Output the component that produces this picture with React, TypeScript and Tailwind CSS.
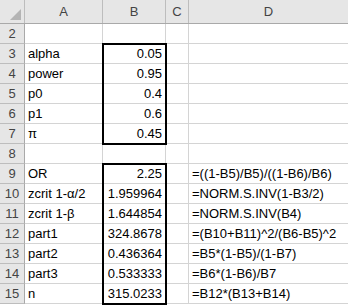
import React from 'react';

type Row = { n: number; a?: string; b?: string; d?: string };

const rows: Row[] = [
    { n: 2 },
    { n: 3, a: 'alpha', b: '0.05' },
    { n: 4, a: 'power', b: '0.95' },
    { n: 5, a: 'p0', b: '0.4' },
    { n: 6, a: 'p1', b: '0.6' },
    { n: 7, a: 'π', b: '0.45' },
    { n: 8 },
    { n: 9, a: 'OR', b: '2.25', d: '=((1-B5)/B5)/((1-B6)/B6)' },
    { n: 10, a: 'zcrit 1-α/2', b: '1.959964', d: '=NORM.S.INV(1-B3/2)' },
    { n: 11, a: 'zcrit 1-β', b: '1.644854', d: '=NORM.S.INV(B4)' },
    { n: 12, a: 'part1', b: '324.8678', d: '=(B10+B11)^2/(B6-B5)^2' },
    { n: 13, a: 'part2', b: '0.436364', d: '=B5*(1-B5)/(1-B7)' },
    { n: 14, a: 'part3', b: '0.533333', d: '=B6*(1-B6)/B7' },
    { n: 15, a: 'n', b: '315.0233', d: '=B12*(B13+B14)' },
];

const cols = 'grid grid-cols-[25px_78px_63px_23px_1fr]';

export default function App() {
    return (
        <div className="w-[348px] h-[306px] overflow-hidden bg-white text-[13px] text-black font-['Liberation_Sans',Arial,sans-serif] leading-none">
            {/* Column headers */}
            <div className={`${cols} h-[24px] bg-[#e6e6e6] border-b border-[#a9a9a9] text-[#444]`}>
                <div className="relative border-r border-[#bdbdbd]">
                    <div className="absolute right-[3px] bottom-[3px] w-0 h-0 border-l-[11px] border-l-transparent border-b-[11px] border-b-[#b4b4b4]" />
                </div>
                <div className="flex items-center justify-center border-r border-[#bdbdbd]">A</div>
                <div className="flex items-center justify-center border-r border-[#bdbdbd]">B</div>
                <div className="flex items-center justify-center border-r border-[#bdbdbd]">C</div>
                <div className="flex items-center justify-center">D</div>
            </div>

            {/* Body */}
            <div className="relative">
                {rows.map((r) => (
                    <div key={r.n} className={`${cols} h-[20px]`}>
                        <div className="flex items-center justify-center bg-[#e6e6e6] text-[#444] border-r border-[#a9a9a9] border-b border-b-[#bdbdbd]">
                            {r.n}
                        </div>
                        <div className="flex items-center pl-[3px] border-r border-b border-[#d4d4d4] whitespace-nowrap">{r.a}</div>
                        <div className="flex items-center justify-end pr-[3px] border-r border-b border-[#d4d4d4]">{r.b}</div>
                        <div className="border-r border-b border-[#d4d4d4]" />
                        <div className="flex items-center pl-[3px] border-b border-[#d4d4d4] whitespace-nowrap">{r.d}</div>
                    </div>
                ))}

                {/* Outlined ranges B3:B7 and B9:B15 */}
                <div className="absolute left-[102px] top-[19px] w-[65px] h-[102px] border-2 border-black pointer-events-none" />
                <div className="absolute left-[102px] top-[139px] w-[65px] h-[142px] border-2 border-black pointer-events-none" />
            </div>
        </div>
    );
}
